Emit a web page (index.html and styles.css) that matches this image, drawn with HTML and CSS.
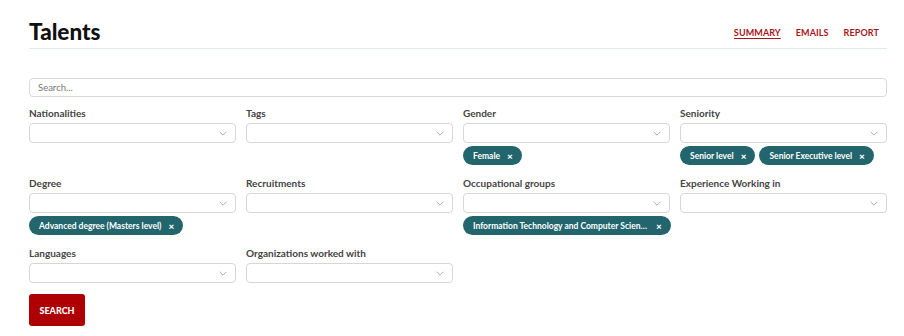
FILE: index.html
```html
<!doctype html>
<html lang="en">
  <head>
    <meta charset="UTF-8" />
    <meta name="viewport" content="width=device-width, initial-scale=1.0" />
    <title>Talents</title>
    <link rel="stylesheet" href="styles.css">
  </head>
  <body>
    <div class="page">
      <div class="header">
        <h1>Talents</h1>
        <nav class="nav">
          <a href="#" class="active">Summary</a>
          <a href="#">Emails</a>
          <a href="#">Report</a>
        </nav>
      </div>

      <input class="search-input" type="text" placeholder="Search..." />

      <div class="filters">
        <div class="field">
          <label>Nationalities</label>
          <div class="select"><svg class="chevron" viewBox="0 0 10 6"><path d="M1 1 L5 5 L9 1" /></svg></div>
        </div>
        <div class="field">
          <label>Tags</label>
          <div class="select"><svg class="chevron" viewBox="0 0 10 6"><path d="M1 1 L5 5 L9 1" /></svg></div>
        </div>
        <div class="field">
          <label>Gender</label>
          <div class="select"><svg class="chevron" viewBox="0 0 10 6"><path d="M1 1 L5 5 L9 1" /></svg></div>
          <div class="chips">
            <span class="chip">Female <b>×</b></span>
          </div>
        </div>
        <div class="field">
          <label>Seniority</label>
          <div class="select"><svg class="chevron" viewBox="0 0 10 6"><path d="M1 1 L5 5 L9 1" /></svg></div>
          <div class="chips">
            <span class="chip">Senior level <b>×</b></span>
            <span class="chip">Senior Executive level <b>×</b></span>
          </div>
        </div>

        <div class="field">
          <label>Degree</label>
          <div class="select"><svg class="chevron" viewBox="0 0 10 6"><path d="M1 1 L5 5 L9 1" /></svg></div>
          <div class="chips">
            <span class="chip">Advanced degree (Masters level) <b>×</b></span>
          </div>
        </div>
        <div class="field">
          <label>Recruitments</label>
          <div class="select"><svg class="chevron" viewBox="0 0 10 6"><path d="M1 1 L5 5 L9 1" /></svg></div>
        </div>
        <div class="field">
          <label>Occupational groups</label>
          <div class="select"><svg class="chevron" viewBox="0 0 10 6"><path d="M1 1 L5 5 L9 1" /></svg></div>
          <div class="chips">
            <span class="chip"><span class="chip-text">Information Technology and Computer Science</span> <b>×</b></span>
          </div>
        </div>
        <div class="field">
          <label>Experience Working in</label>
          <div class="select"><svg class="chevron" viewBox="0 0 10 6"><path d="M1 1 L5 5 L9 1" /></svg></div>
        </div>

        <div class="field">
          <label>Languages</label>
          <div class="select"><svg class="chevron" viewBox="0 0 10 6"><path d="M1 1 L5 5 L9 1" /></svg></div>
        </div>
        <div class="field">
          <label>Organizations worked with</label>
          <div class="select"><svg class="chevron" viewBox="0 0 10 6"><path d="M1 1 L5 5 L9 1" /></svg></div>
        </div>
      </div>

      <button class="search-btn">Search</button>
    </div>
  </body>
</html>
```

FILE: styles.css
```css
body {
  margin: 0;
  font-family: Lato, 'Open Sans', sans-serif;
  background: white;
  color: #333;
}

.page {
  width: 858px;
  margin-left: 29px;
  padding-top: 20px;
}

.header {
  display: flex;
  align-items: center;
  justify-content: space-between;
  border-bottom: 1px solid #deeef0;
  padding-bottom: 4px;
}

.header h1 {
  margin: 0;
  font-size: 22.5px;
  font-weight: 900;
  color: #111;
  line-height: 24px;
}

.nav {
  display: flex;
  gap: 15px;
  padding-right: 8px;
}

.nav a {
  color: #a8161b;
  font-size: 9px;
  font-weight: 700;
  text-transform: uppercase;
  text-decoration: none;
  letter-spacing: 0.1px;
}

.nav a.active {
  text-decoration: underline;
  text-underline-offset: 2px;
}

.search-input {
  display: block;
  box-sizing: border-box;
  width: 100%;
  height: 19px;
  margin-top: 29px;
  padding: 0 8px;
  border: 1px solid #d9d9d9;
  border-radius: 4px;
  font-family: inherit;
  font-size: 9.5px;
  color: #555;
}

.search-input::placeholder {
  color: #777;
}

.filters {
  display: grid;
  grid-template-columns: repeat(4, 207px);
  column-gap: 10px;
  row-gap: 11px;
  margin-top: 9px;
  align-items: start;
}

.field label {
  display: block;
  font-size: 10px;
  font-weight: 700;
  color: #444;
  line-height: 14px;
  margin-bottom: 3px;
}

.select {
  position: relative;
  box-sizing: border-box;
  height: 20px;
  border: 1px solid #d6d6d6;
  border-radius: 4px;
}

.chevron {
  position: absolute;
  right: 7px;
  top: 7px;
  width: 10px;
  height: 5px;
  fill: none;
  stroke: #9a9a9a;
  stroke-width: 1;
}

.chips {
  display: flex;
  flex-wrap: wrap;
  gap: 4px;
  margin-top: 3px;
}

.chip {
  display: inline-flex;
  align-items: center;
  height: 19px;
  padding: 0 9px 0 10px;
  border-radius: 10px;
  background: #22656c;
  color: white;
  font-size: 8.5px;
  font-weight: 700;
  white-space: nowrap;
}

.chip b {
  margin-left: 7px;
  font-size: 10px;
}

.chip-text {
  display: inline-block;
  max-width: 176px;
  overflow: hidden;
  text-overflow: ellipsis;
}

.search-btn {
  display: block;
  margin-top: 11px;
  width: 56px;
  height: 32px;
  border: none;
  border-radius: 3px;
  background: #ae0000;
  color: white;
  font-family: inherit;
  font-size: 9px;
  font-weight: 900;
  text-transform: uppercase;
}
```
